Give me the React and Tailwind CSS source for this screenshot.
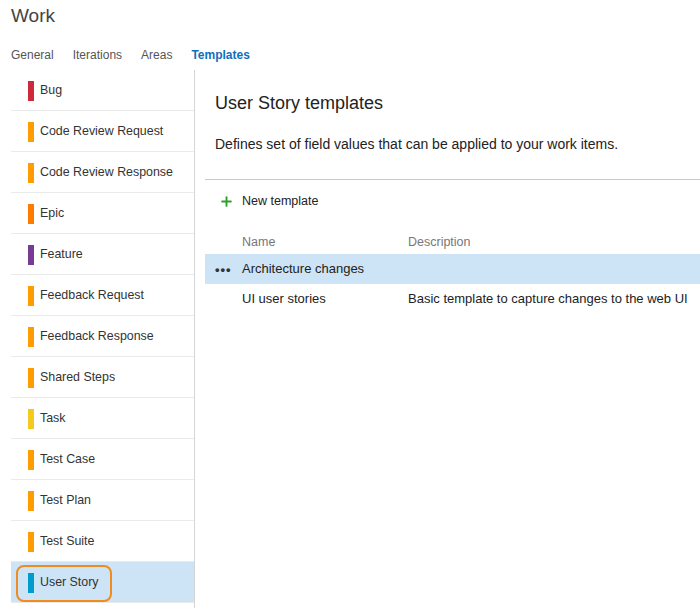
import { Plus } from 'lucide-react'

const TYPES = [
  { label: 'Bug', color: 'bg-[#cc293d]' },
  { label: 'Code Review Request', color: 'bg-[#ff9d00]' },
  { label: 'Code Review Response', color: 'bg-[#ff9d00]' },
  { label: 'Epic', color: 'bg-[#ff7b00]' },
  { label: 'Feature', color: 'bg-[#773b93]' },
  { label: 'Feedback Request', color: 'bg-[#ff9d00]' },
  { label: 'Feedback Response', color: 'bg-[#ff9d00]' },
  { label: 'Shared Steps', color: 'bg-[#ff9d00]' },
  { label: 'Task', color: 'bg-[#f2cb1d]' },
  { label: 'Test Case', color: 'bg-[#ff9d00]' },
  { label: 'Test Plan', color: 'bg-[#ff9d00]' },
  { label: 'Test Suite', color: 'bg-[#ff9d00]' },
  { label: 'User Story', color: 'bg-[#009ccc]', selected: true }
]

const TABS = ['General', 'Iterations', 'Areas', 'Templates']

const TEMPLATES = [
  { name: 'Architecture changes', desc: '', selected: true },
  { name: 'UI user stories', desc: 'Basic template to capture changes to the web UI' }
]

export default function App() {
  return (
    <div className="w-[700px] h-[608px] overflow-hidden bg-white text-[#333] font-['Liberation_Sans',sans-serif] text-[12.4px]">
      {/* Header */}
      <div className="pl-[11px] pt-[4px] h-[36px] text-[19px] font-light text-[#444] leading-[24px]">Work</div>
      <div className="flex gap-[19px] pl-[11px] pt-[3px] h-[34px] items-center text-[12px]">
        {TABS.map((t) => (
          <span key={t} className={t === 'Templates' ? 'text-[#106ebe] font-bold' : 'text-[#555]'}>
            {t}
          </span>
        ))}
      </div>

      <div className="flex h-[538px]">
        {/* Sidebar */}
        <div className="ml-[11px] w-[184px] border-r border-[#d4d4d4] shrink-0">
          {TYPES.map((t) => (
            <div
              key={t.label}
              className={`h-[41px] flex items-center pt-[1px] border-b border-[#eaeaea] ${t.selected ? 'bg-[#cce4f6]' : ''}`}
            >
              <div className="relative flex items-center gap-[6px] pl-[17px]">
                {t.selected && (
                  <div className="absolute left-[5px] -top-[8px] w-[96px] h-[37px] border-2 border-[#f08c1e] rounded-[8px]" />
                )}
                <div className={`w-[6px] h-[20px] ${t.color}`} />
                <span>{t.label}</span>
              </div>
            </div>
          ))}
        </div>

        {/* Content */}
        <div className="flex-1">
          <div className="pl-[20px] pt-[21px] text-[18px] leading-[24px] text-[#222]">User Story templates</div>
          <div className="pl-[20px] pt-[19px] h-[64px] text-[14px] text-[#222]">
            Defines set of field values that can be applied to your work items.
          </div>
          <div className="ml-[10px] border-t border-[#c8c8c8]" />
          <div className="ml-[10px] h-[42px] flex items-center gap-[8px] pl-[14px]">
            <Plus className="w-[15px] h-[15px] text-[#2e9e2e]" strokeWidth={3} />
            <span className="text-[#222] text-[12.5px]">New template</span>
          </div>
          <div className="ml-[10px] pt-[9px]">
            <div className="flex h-[23px] items-center text-[#777] text-[12.5px]">
              <span className="w-[203px] pl-[37px]">Name</span>
              <span>Description</span>
            </div>
            {TEMPLATES.map((r) => (
              <div
                key={r.name}
                className={`flex h-[30px] items-center text-[#222] text-[13px] ${r.selected ? 'bg-[#cce4f6]' : ''}`}
              >
                <span className="w-[37px] pl-[10px] text-[#333] font-bold tracking-[1px] leading-none">
                  {r.selected ? '•••' : ''}
                </span>
                <span className="w-[166px]">{r.name}</span>
                <span>{r.desc}</span>
              </div>
            ))}
          </div>
        </div>
      </div>
    </div>
  )
}
